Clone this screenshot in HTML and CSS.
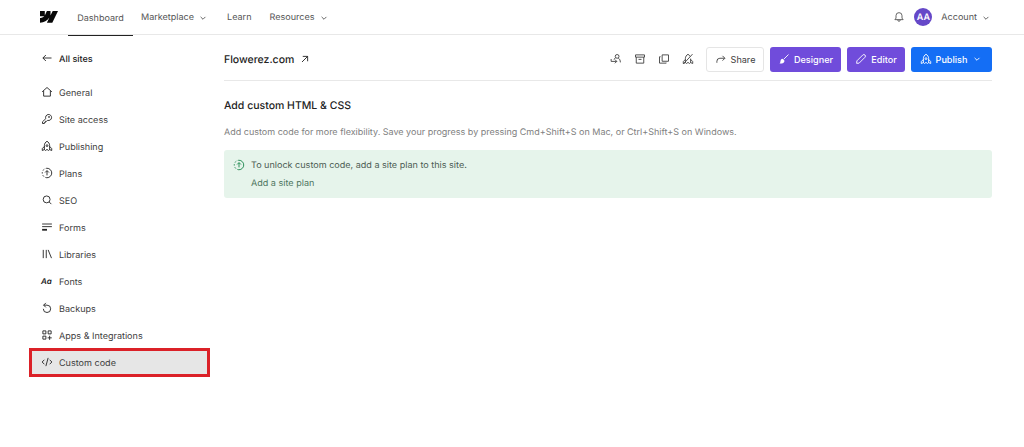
FILE: index.html
```html
<!DOCTYPE html>
<html lang="en">
<head>
  <meta charset="UTF-8" />
  <meta name="viewport" content="width=device-width, initial-scale=1" />
  <title>Custom code - Flowerez.com</title>
  <link rel="stylesheet" href="styles.css">
</head>
<body>

  <!-- Shared icons -->
  <svg class="sprite">
    <symbol id="chevron" viewBox="0 0 16 16"><path d="M4.8 6.5 8 9.700l3.200-3.200" /></symbol>
    <symbol id="rocket" viewBox="0 0 16 16"><path d="M4.5 13V7.5C4.5 4.800 6 2.800 8 1.700c2 1.100 3.500 3.100 3.500 5.800V13M4.500 8.500 1.700 11.500V14l2.800-1.200L6 14l2-1.500 2 1.500 1.500-1.200 2.800 1.200v-2.500l-2.800-3" /><circle cx="8" cy="7.500" r="1.200" /></symbol>
    <symbol id="upgrade" viewBox="0 0 16 16"><path d="M8 1.700a6.300 6.300 0 0 1 0 12.600M8 11.200V5M5.500 7.300 8 4.800l2.500 2.500" /><path d="M8 14.300A6.300 6.300 0 0 1 8 1.700" stroke-dasharray="2.200 2.200" /></symbol>
  </svg>

  <header class="topbar">
    <a class="logo" href="#" aria-label="Home">
      <svg viewBox="0 0 18 12"><path d="M18 0 12.300 11.800H6.900L9.300 6.800H9.200C7.200 9.600 4.200 11.400 0 11.800V7.100s2.700-.2 4.300-1.900H0V.1h4.800v4.100h.1L6.900.1h3.600v4.100h.1L12.700 0z" /></svg>
    </a>
    <nav class="nav">
      <a class="nav-link active" href="#">Dashboard</a>
      <a class="nav-link market" href="#">Marketplace <svg class="icon chevron"><use href="#chevron" /></svg></a>
      <a class="nav-link learn" href="#">Learn</a>
      <a class="nav-link" href="#">Resources <svg class="icon chevron"><use href="#chevron" /></svg></a>
    </nav>
    <div class="user">
      <svg class="icon bell" viewBox="0 0 16 16"><path d="M2.500 11.500h11L12 9.500V6.200a4 4 0 0 0-8 0v3.300zM6.300 11.800a1.700 1.900 0 0 0 3.400 0" /></svg>
      <span class="avatar">AA</span>
      <a class="account" href="#">Account <svg class="icon chevron"><use href="#chevron" /></svg></a>
    </div>
  </header>

  <div class="page">
    <aside class="sidebar">
      <a class="side-link back" href="#"><svg class="icon" viewBox="0 0 16 16"><path d="M14 8H2.500M6.500 4l-4 4 4 4" /></svg>All sites</a>
      <a class="side-link" href="#"><svg class="icon" viewBox="0 0 16 16"><path d="M1.500 7.800 8 2l6.500 5.800M3.500 6.500v7h9v-7" /></svg>General</a>
      <a class="side-link" href="#"><svg class="icon" viewBox="0 0 16 16"><path d="M6.400 7.500a4 4 0 1 1 2.500 2.300L7.500 11H6v1.500H4.500V14H2v-2.300z" /><circle cx="10.700" cy="5.300" r=".7" /></svg>Site access</a>
      <a class="side-link" href="#"><svg class="icon"><use href="#rocket" /></svg>Publishing</a>
      <a class="side-link" href="#"><svg class="icon"><use href="#upgrade" /></svg>Plans</a>
      <a class="side-link" href="#"><svg class="icon" viewBox="0 0 16 16"><circle cx="7.500" cy="7.200" r="4.600" /><path d="m10.800 10.500 3 3" /></svg>SEO</a>
      <a class="side-link" href="#"><svg class="icon" viewBox="0 0 16 16"><path d="M1.500 4h13M1.500 7.500h13" /><path class="thick" d="M1.500 11.700h6.500" /></svg>Forms</a>
      <a class="side-link" href="#"><svg class="icon" viewBox="0 0 16 16"><path d="M3 2.500v11M7 2.500v11M9.500 2.500l4.500 11" /></svg>Libraries</a>
      <a class="side-link" href="#"><span class="icon fonts-icon">Aa</span>Fonts</a>
      <a class="side-link" href="#"><svg class="icon" viewBox="0 0 16 16"><path d="M3.500 4.200H8a4.900 4.900 0 1 1-4.900 4.900M6.500 1.200l-3 3 3 3" /></svg>Backups</a>
      <a class="side-link" href="#"><svg class="icon" viewBox="0 0 16 16"><path d="M2.500 2.500h4v4h-4zM9.500 2.500h4v4h-4zM2.500 9.500h4v4h-4zM11.500 9v5.500M8.800 11.800h5.500" /></svg>Apps &amp; Integrations</a>
      <a class="side-link selected" href="#"><svg class="icon" viewBox="0 0 16 16"><path d="M4.500 5 1.500 8l3 3M11.500 5l3 3-3 3M9.500 2.500l-3 11" /></svg>Custom code</a>
    </aside>

    <main class="content">
      <div class="site-bar">
        <h1 class="site-name">Flowerez.com <svg class="icon" viewBox="0 0 16 16"><path d="M4 12l7.500-7.500M5 4.500h6.500V11" /></svg></h1>
        <div class="tools">
          <svg class="icon" viewBox="0 0 16 16"><circle cx="9.500" cy="4.500" r="2.500" /><path d="M7.500 6.500 5 8.500M11 6.800c1.800 1 2.800 2.900 2.800 5.700M1.500 8v3.200H9M6.500 8.700 9 11.200l-2.500 2.500" /></svg>
          <svg class="icon" viewBox="0 0 16 16"><path d="M2 2.500h12v3H2zM3 5.500v8h10v-8M6 8.500h4" /></svg>
          <svg class="icon" viewBox="0 0 16 16"><path d="M5.500 2.500h8.500V11H5.500zM3.500 5H2v8.500h9V13" /></svg>
          <svg class="icon" viewBox="0 0 16 16"><path d="M4.500 13V7.500C4.500 4.800 6 2.800 8 1.700c1.300.7 2.300 1.800 2.900 3M11.500 7.500V13M4.500 8.500 1.700 11.500V14l2.800-1.200L6 14l2-1.500 2 1.500 1.500-1.200 2.800 1.200v-2.500l-2.800-3M14 1.500l-12 13" /></svg>
        </div>
        <div class="actions">
          <button class="btn share"><svg class="icon" viewBox="0 0 16 16"><path d="M2.500 13v-2a4 4 0 0 1 4-4H13M10 3.800 13.200 7 10 10.200" /></svg>Share</button>
          <button class="btn purple designer"><svg class="icon" viewBox="0 0 16 16"><path d="M14 2 7.500 8.500" /><path class="solid" d="M6 7.500 8.700 10.200C8.700 13.300 5.500 14.300 2 14c1.200-1 1-1.800 1.300-3.400C3.700 8.500 4.800 7.500 6 7.500z" /></svg>Designer</button>
          <button class="btn purple editor"><svg class="icon" viewBox="0 0 16 16"><path d="m2.500 10.500 7.800-7.800a2.100 2.100 0 0 1 3 3L5.500 13.500l-3.300.3z" /></svg>Editor</button>
          <button class="btn publish"><svg class="icon"><use href="#rocket" /></svg>Publish<svg class="icon chevron"><use href="#chevron" /></svg></button>
        </div>
      </div>

      <h2 class="title">Add custom HTML &amp; CSS</h2>
      <p class="description">Add custom code for more flexibility. Save your progress by pressing Cmd+Shift+S on Mac, or Ctrl+Shift+S on Windows.</p>

      <div class="notice">
        <svg class="icon"><use href="#upgrade" /></svg>
        <div class="notice-text">
          <p>To unlock custom code, add a site plan to this site.</p>
          <a href="#">Add a site plan</a>
        </div>
      </div>
    </main>
  </div>

</body>
</html>
```
FILE: styles.css
```css
* {
  box-sizing: border-box;
}

body {
  margin: 0;
  background: #fff;
  font-family: Inter, "Liberation Sans", sans-serif;
  font-size: 9.05px;
  text-rendering: geometricPrecision;
  color: #404040;
}

a {
  color: inherit;
  text-decoration: none;
}

h1, h2, p {
  margin: 0;
}

/* Icons */
.sprite {
  display: none;
}

.icon {
  width: 12px;
  height: 12px;
  flex: none;
  fill: none;
  stroke: currentColor;
  stroke-width: 1.2;
}

.icon .thick {
  stroke-width: 2.4;
}

.icon .solid {
  fill: currentColor;
  stroke: none;
}

/* Top navigation */
.topbar {
  display: flex;
  align-items: center;
  height: 35px;
  padding: 0 32px 0 40px;
  border-bottom: 1px solid #e8e8e8;
  color: #555;
}

.logo {
  display: flex;
  width: 28px;
}

.logo svg {
  width: 18px;
  height: 12px;
  fill: #080808;
}

.nav {
  display: flex;
  height: 35px;
}

.nav-link {
  display: flex;
  align-items: center;
  gap: 3px;
  padding-top: 1px;
}

.nav-link.active {
  width: 65px;
  height: 36px;
  justify-content: center;
  margin-right: 8px;
  padding-top: 2px;
  border-bottom: 1px solid #222;
}

.nav-link.market {
  margin-right: 18px;
}

.nav-link.learn {
  margin-right: 18px;
}

.user {
  display: flex;
  align-items: center;
  margin-left: auto;
}

.avatar {
  width: 18px;
  height: 18px;
  margin: 0 9px;
  border-radius: 50%;
  background: #6548c8;
  color: #fff;
  font-size: 9px;
  font-weight: 600;
  line-height: 19px;
  text-align: center;
}

.account {
  display: flex;
  align-items: center;
  gap: 3px;
  padding-top: 1px;
}

/* Page columns */
.page {
  display: flex;
}

.sidebar {
  width: 181px;
  margin: 10px 14px 0 29px;
}

.side-link {
  display: flex;
  align-items: center;
  gap: 6px;
  height: 27px;
  padding: 2px 0 0 12px;
}

.side-link.back {
  margin-bottom: 7px;
  color: #222;
  font-weight: 500;
}

.side-link .icon {
  margin-bottom: 3px;
  color: #222;
}

.fonts-icon {
  font-size: 8px;
  font-style: italic;
  font-weight: 600;
  line-height: 12px;
}

.side-link.selected {
  height: 29px;
  margin-top: -1px;
  padding-left: 9px;
  border: 3px solid #db2128;
  background: #e6e6e6;
}

.content {
  width: 768px;
}

/* Site name and actions */
.site-bar {
  display: flex;
  align-items: center;
  height: 46px;
  padding-top: 3px;
  border-bottom: 1px solid #e8e8e8;
}

.site-name {
  display: flex;
  align-items: center;
  gap: 5px;
  font-size: 10.5px;
  font-weight: 500;
  color: #222;
}

.tools {
  display: flex;
  gap: 12px;
  margin-left: auto;
  margin-right: 12px;
}

.actions {
  display: flex;
  gap: 6px;
}

.btn {
  display: flex;
  align-items: center;
  justify-content: center;
  gap: 4px;
  height: 25px;
  padding: 0;
  border: none;
  border-radius: 3px;
  color: #fff;
  font-family: inherit;
  font-size: 9.1px;
  font-weight: 500;
}

.share {
  width: 58px;
  border: 1px solid #e5e5e5;
  background: #fff;
  color: #404040;
  font-weight: 400;
}

.purple {
  background: #704cdb;
}

.designer {
  width: 71px;
}

.editor {
  width: 58px;
}

.publish {
  width: 81px;
  background: #146ef5;
}

/* Custom code section */
.title {
  margin-top: 17px;
  font-size: 10.5px;
  font-weight: 500;
  line-height: 16px;
  color: #222;
}

.description {
  margin-top: 12px;
  font-size: 9px;
  line-height: 14px;
  color: #808080;
}

.notice {
  display: flex;
  gap: 6px;
  height: 48px;
  margin-top: 10px;
  padding: 9px;
  border-radius: 3px;
  background: #e6f4eb;
  color: #4c5c53;
}

.notice .icon {
  color: #18864b;
}

.notice-text {
  padding-top: 1px;
  line-height: 12px;
}

.notice-text a {
  display: block;
  margin-top: 6px;
  color: #4d7560;
}
```
